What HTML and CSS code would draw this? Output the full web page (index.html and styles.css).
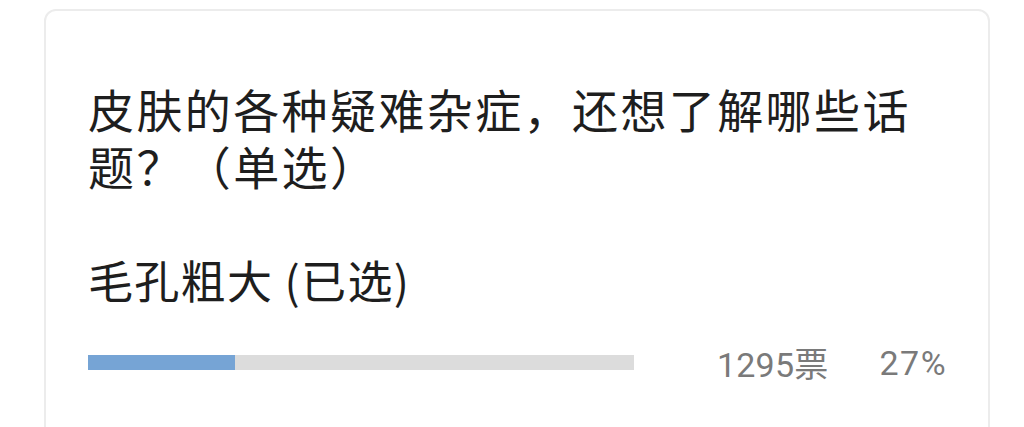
FILE: index.html
```html
<!DOCTYPE html>
<html lang="zh">
<head>
<meta charset="utf-8">
<link rel="stylesheet" href="styles.css">
</head>
<body>
<div class="card">
  <div class="question">皮肤的各种疑难杂症，还想了解哪些话题？（单选）</div>
  <div class="option">毛孔粗大 (已选)</div>
  <div class="result">
    <div class="bar"><div class="fill" style="width:27%"></div></div>
    <div class="votes">1295票</div>
    <div class="pct">27%</div>
  </div>
</div>
</body>
</html>
```
FILE: styles.css
```css
html, body {
  margin: 0;
  padding: 0;
  background: #ffffff;
  overflow: hidden;
}
body {
  font-family: "Noto Sans CJK SC", "Noto Sans", sans-serif;
  color: #1e1e1e;
}
.card {
  margin: 9px 0 0 44px;
  width: 946px;
  height: 500px;
  border: 2px solid #ececec;
  border-radius: 12px;
  box-sizing: border-box;
  padding: 69px 0 0 42px;
}
.question {
  font-size: 46px;
  line-height: 57px;
  letter-spacing: 2.4px;
  width: 840px;
}
.option {
  margin-top: 60px;
  font-size: 45px;
  line-height: 52px;
  letter-spacing: 1.3px;
}
.result {
  display: flex;
  align-items: center;
  margin-top: 32px;
}
.bar {
  flex: 0 0 546px;
  height: 15px;
  background: #dcdcdc;
}
.fill {
  height: 100%;
  background: #76a4d5;
}
.votes, .pct {
  font-family: Roboto, "Noto Sans CJK SC", sans-serif;
  font-size: 34px;
  color: #7a7a7a;
  letter-spacing: 0.2px;
  white-space: nowrap;
  flex: 0 0 auto;
}
.votes {
  margin-left: 83px;
}
.pct {
  margin-left: 51px;
  letter-spacing: 1.5px;
}
```
